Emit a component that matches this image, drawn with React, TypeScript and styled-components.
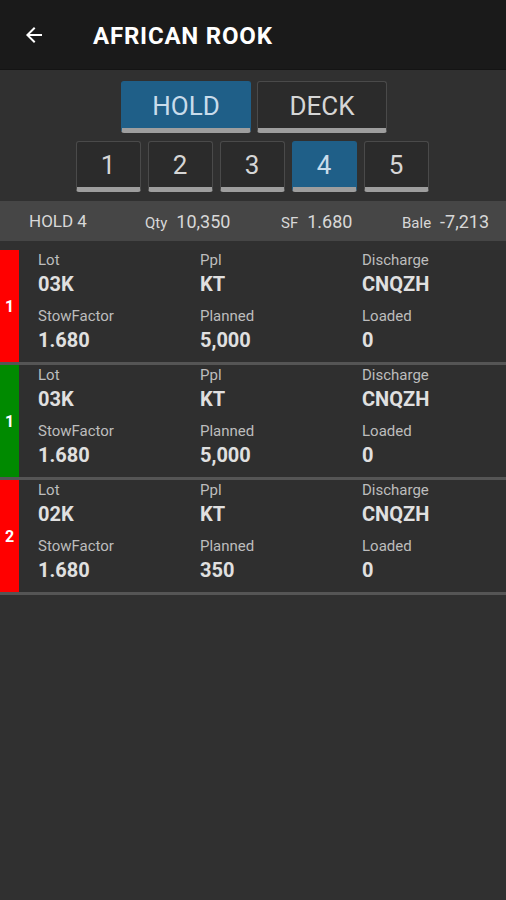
import React from 'react';
import styled, { createGlobalStyle } from 'styled-components';

type Cargo = {
	tag: string;
	color: string;
	lot: string;
	ppl: string;
	discharge: string;
	stowFactor: string;
	planned: string;
	loaded: string;
};

const cargoes: Cargo[] = [
	{ tag: '1', color: '#ff0000', lot: '03K', ppl: 'KT', discharge: 'CNQZH', stowFactor: '1.680', planned: '5,000', loaded: '0' },
	{ tag: '1', color: '#008a00', lot: '03K', ppl: 'KT', discharge: 'CNQZH', stowFactor: '1.680', planned: '5,000', loaded: '0' },
	{ tag: '2', color: '#ff0000', lot: '02K', ppl: 'KT', discharge: 'CNQZH', stowFactor: '1.680', planned: '350', loaded: '0' },
];

const holds = ['1', '2', '3', '4', '5'];

const App: React.FC = () => {
	return (
		<>
			<GlobalStyle />
			<Screen>
				<AppBar>
					<BackIcon width="24" height="24" viewBox="0 0 24 24">
						<path d="M20 11H7.83l5.59-5.59L12 4l-8 8 8 8 1.41-1.41L7.83 13H20v-2z" fill="#fff" />
					</BackIcon>
					<Title>AFRICAN ROOK</Title>
				</AppBar>
				<Toggles>
					<ModeButton active>HOLD</ModeButton>
					<ModeButton>DECK</ModeButton>
				</Toggles>
				<HoldRow>
					{holds.map((h) => (
						<HoldButton key={h} active={h === '4'}>
							{h}
						</HoldButton>
					))}
				</HoldRow>
				<Summary>
					<SummaryName>HOLD 4</SummaryName>
					<SummaryItem>
						<SummaryLabel>Qty</SummaryLabel>
						<SummaryValue>10,350</SummaryValue>
					</SummaryItem>
					<SummaryItem>
						<SummaryLabel>SF</SummaryLabel>
						<SummaryValue>1.680</SummaryValue>
					</SummaryItem>
					<SummaryItem>
						<SummaryLabel>Bale</SummaryLabel>
						<SummaryValue>-7,213</SummaryValue>
					</SummaryItem>
				</Summary>
				<List>
					{cargoes.map((c, i) => (
						<CargoRow key={i}>
							<Marker color={c.color}>{c.tag}</Marker>
							<Fields>
								<Field>
									<Label>Lot</Label>
									<Value>{c.lot}</Value>
								</Field>
								<Field>
									<Label>Ppl</Label>
									<Value>{c.ppl}</Value>
								</Field>
								<Field>
									<Label>Discharge</Label>
									<Value>{c.discharge}</Value>
								</Field>
								<Field>
									<Label>StowFactor</Label>
									<Value>{c.stowFactor}</Value>
								</Field>
								<Field>
									<Label>Planned</Label>
									<Value>{c.planned}</Value>
								</Field>
								<Field>
									<Label>Loaded</Label>
									<Value>{c.loaded}</Value>
								</Field>
							</Fields>
						</CargoRow>
					))}
				</List>
			</Screen>
		</>
	);
};

export default App;

const GlobalStyle = createGlobalStyle`
	html, body {
		margin: 0;
		padding: 0;
		background: #303030;
	}
	body {
		font-family: Roboto, "Liberation Sans", sans-serif;
	}
`;

const Screen = styled.div`
	width: 506px;
	min-height: 900px;
	background: #303030;
	display: flex;
	flex-direction: column;
`;

const AppBar = styled.div`
	height: 70px;
	background: #1a1a1a;
	display: flex;
	align-items: center;
	padding-left: 22px;
	box-sizing: border-box;
	border-bottom: 1px solid #141414;
`;

const BackIcon = styled.svg`
	margin-right: 47px;
	margin-top: 1px;
`;

const Title = styled.h1`
	margin: 3px 0 0;
	font-size: 24px;
	font-weight: 700;
	color: #fff;
	letter-spacing: 0.8px;
`;

const Toggles = styled.div`
	display: flex;
	justify-content: center;
	gap: 6px;
	padding-top: 11px;
	padding-left: 2px;
`;

const ModeButton = styled.div<{ active?: boolean }>`
	width: 130px;
	height: 52px;
	box-sizing: border-box;
	background: ${({ active }) => (active ? '#1f5f88' : '#2b2b2b')};
	border: 1px solid ${({ active }) => (active ? '#1f5f88' : '#4a4a4a')};
	border-bottom: 5px solid #9e9e9e;
	border-radius: 3px;
	color: ${({ active }) => (active ? '#c9dceb' : '#d6d6d6')};
	font-size: 26px;
	display: flex;
	align-items: center;
	justify-content: center;
	padding-top: 2px;
`;

const HoldRow = styled.div`
	display: flex;
	justify-content: center;
	gap: 7px;
	padding-top: 8px;
	padding-right: 2px;
`;

const HoldButton = styled.div<{ active?: boolean }>`
	width: 65px;
	height: 51px;
	box-sizing: border-box;
	background: ${({ active }) => (active ? '#1f5f88' : '#2b2b2b')};
	border: 1px solid ${({ active }) => (active ? '#1f5f88' : '#4a4a4a')};
	border-bottom: 5px solid #9e9e9e;
	border-radius: 3px;
	color: ${({ active }) => (active ? '#c9dceb' : '#d6d6d6')};
	font-size: 26px;
	display: flex;
	align-items: center;
	justify-content: center;
`;

const Summary = styled.div`
	margin-top: 9px;
	height: 40px;
	background: #464646;
	display: flex;
	align-items: center;
	color: #d8d8d8;
	font-size: 17px;
	padding-left: 29px;
`;

const SummaryName = styled.span`
	width: 116px;
`;

const SummaryItem = styled.span`
	display: flex;
	align-items: baseline;
	&:nth-of-type(2) {
		width: 136px;
	}
	&:nth-of-type(3) {
		width: 121px;
	}
`;

const SummaryLabel = styled.span`
	font-size: 15px;
	margin-right: 9px;
`;

const SummaryValue = styled.span`
	font-size: 18px;
`;

const List = styled.div`
	display: flex;
	flex-direction: column;
	margin-top: 9px;
`;

const CargoRow = styled.div`
	display: flex;
	background: #2f2f2f;
	border-bottom: 3px solid #555;
`;

const Marker = styled.div<{ color: string }>`
	width: 19px;
	background: ${({ color }) => color};
	color: #fff;
	font-weight: 700;
	font-size: 16px;
	display: flex;
	align-items: center;
	justify-content: center;
`;

const Fields = styled.div`
	flex: 1;
	display: grid;
	grid-template-columns: 162px 162px 1fr;
	row-gap: 8px;
	padding: 1px 0 7px 19px;
`;

const Field = styled.div`
	display: flex;
	flex-direction: column;
`;

const Label = styled.span`
	font-size: 15px;
	color: #bdbdbd;
	line-height: 18px;
`;

const Value = styled.span`
	font-size: 20px;
	font-weight: 700;
	color: #e0e0e0;
	line-height: 30px;
`;
